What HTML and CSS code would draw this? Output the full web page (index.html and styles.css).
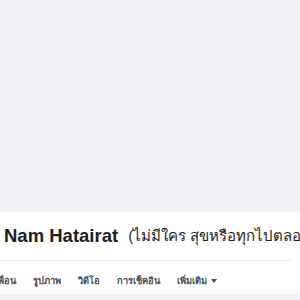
FILE: index.html
```html
<!DOCTYPE html>
<html lang="th">
<head>
<meta charset="utf-8">
<link rel="stylesheet" href="styles.css">
</head>
<body>
<div class="cover"></div>
<div class="panel">
  <div class="title-row">
    <h1 class="name">Nam Hatairat</h1>
    <span class="alt-name">(ไม่มีใคร สุขหรือทุกไปตลอด)</span>
  </div>
  <div class="divider"></div>
  <nav class="tabs">
    <a class="tab tab-cut">เพื่อน</a>
    <a class="tab">รูปภาพ</a>
    <a class="tab">วิดีโอ</a>
    <a class="tab">การเช็คอิน</a>
    <a class="tab">เพิ่มเติม <span class="caret"></span></a>
  </nav>
</div>
</body>
</html>
```
FILE: styles.css
```css
html, body {
  margin: 0;
  padding: 0;
  background: #f0f1f5;
  font-family: "Liberation Sans", Arial, "DejaVu Sans", sans-serif;
  overflow: hidden;
}
.cover {
  height: 212px;
}
.panel {
  background: #fff;
  width: 300px;
}
.title-row {
  height: 48px;
  display: flex;
  align-items: center;
  padding-left: 4px;
  white-space: nowrap;
  overflow: hidden;
}
.name {
  margin: 0;
  font-size: 18.5px;
  line-height: 24px;
  font-weight: bold;
  color: #1c1e21;
}
.alt-name {
  margin-left: 10px;
  font-size: 15px;
  line-height: 24px;
  color: #1c1e21;
}
.divider {
  height: 1px;
  background: #e5e5e8;
  margin-right: 9px;
}
.tabs {
  height: 33px;
  box-sizing: border-box;
  padding-top: 5px;
  display: flex;
  align-items: center;
  gap: 17px;
  margin-left: -5px;
  white-space: nowrap;
}
.tab {
  font-size: 9.3px;
  font-weight: bold;
  color: #4b4f56;
}
.caret {
  display: inline-block;
  width: 0;
  height: 0;
  border-left: 3px solid transparent;
  border-right: 3px solid transparent;
  border-top: 4px solid #4b4f56;
  vertical-align: middle;
  margin-left: 1px;
}
```
